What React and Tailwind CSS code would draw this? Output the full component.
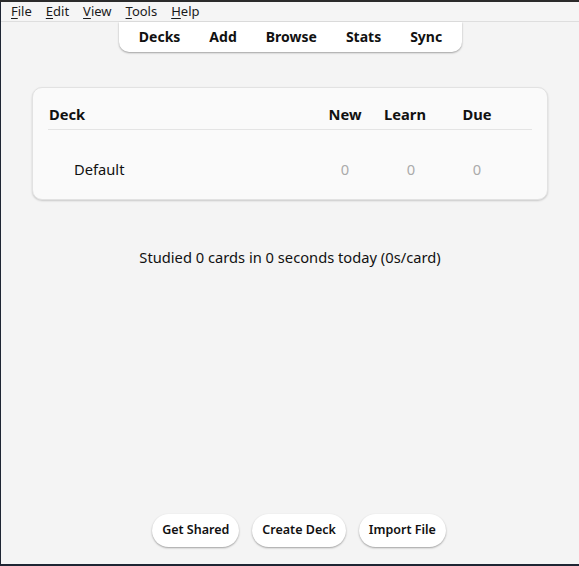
const menus = [
    ['F', 'ile'],
    ['E', 'dit'],
    ['V', 'iew'],
    ['T', 'ools'],
    ['H', 'elp'],
];

const tabs = ['Decks', 'Add', 'Browse', 'Stats', 'Sync'];

const buttons = ['Get Shared', 'Create Deck', 'Import File'];

const cols = 'grid grid-cols-[1fr_66px_66px_66px_22px]';

export default function App() {
    return (
        <div
            className="flex h-[566px] w-[579px] flex-col overflow-hidden bg-[#1e2533] text-[#111]"
            style={{ fontFamily: '"Noto Sans", "Open Sans", sans-serif' }}
        >
            <div className="h-[2px] shrink-0 bg-[#2b2b2b]" />
            <div className="ml-px flex min-h-0 flex-1 flex-col bg-[#f4f4f4]">
                <div className="flex h-[20px] shrink-0 items-center gap-[14px] border-b border-[#dedede] bg-[#f5f5f5] pl-[10px] text-[13px] leading-none text-[#1a1a1a]">
                    {menus.map(([key, rest]) => (
                        <span key={key}>
                            <span className="underline underline-offset-2">{key}</span>
                            {rest}
                        </span>
                    ))}
                </div>

                <div className="flex justify-center">
                    <div className="ml-[1px] flex h-[30px] items-center gap-[29px] rounded-b-[10px] bg-white px-[20px] pb-[1px] text-[14px] font-bold shadow-[0_1px_2px_rgba(0,0,0,0.35)]">
                        {tabs.map((t) => (
                            <span key={t}>{t}</span>
                        ))}
                    </div>
                </div>

                <div className="mx-[31px] mt-[35px] rounded-[10px] border border-[#e2e2e2] bg-[#fafafa] px-[15px] pb-[19px] text-[14.7px] leading-[22px] shadow-[0_1px_2px_rgba(0,0,0,0.18)]">
                    <div className={`${cols} h-[42px] items-end border-b border-[#e4e4e4] pb-[4px] font-bold`}>
                        <span className="pl-px">Deck</span>
                        <span className="text-center">New</span>
                        <span className="pr-[12px] text-center">Learn</span>
                        <span className="text-center">Due</span>
                        <span />
                    </div>
                    <div className={`${cols} pt-[28px]`}>
                        <span className="pl-[26px]">Default</span>
                        <span className="text-center text-[#aaa]">0</span>
                        <span className="text-center text-[#aaa]">0</span>
                        <span className="text-center text-[#aaa]">0</span>
                        <span />
                    </div>
                </div>

                <p className="mt-[46px] text-center text-[14.7px] leading-[22px] text-[#111]">
                    Studied 0 cards in 0 seconds today (0s/card)
                </p>

                <div className="flex-1" />

                <div className="mb-[17px] flex justify-center gap-[13px] pl-[18px]">
                    {buttons.map((b) => (
                        <button
                            key={b}
                            className="h-[33px] rounded-full bg-white px-[10px] text-[12.5px] font-semibold shadow-[0_1px_2px_rgba(0,0,0,0.35)]"
                        >
                            {b}
                        </button>
                    ))}
                </div>
            </div>
            <div className="h-[2px] shrink-0" />
        </div>
    );
}
